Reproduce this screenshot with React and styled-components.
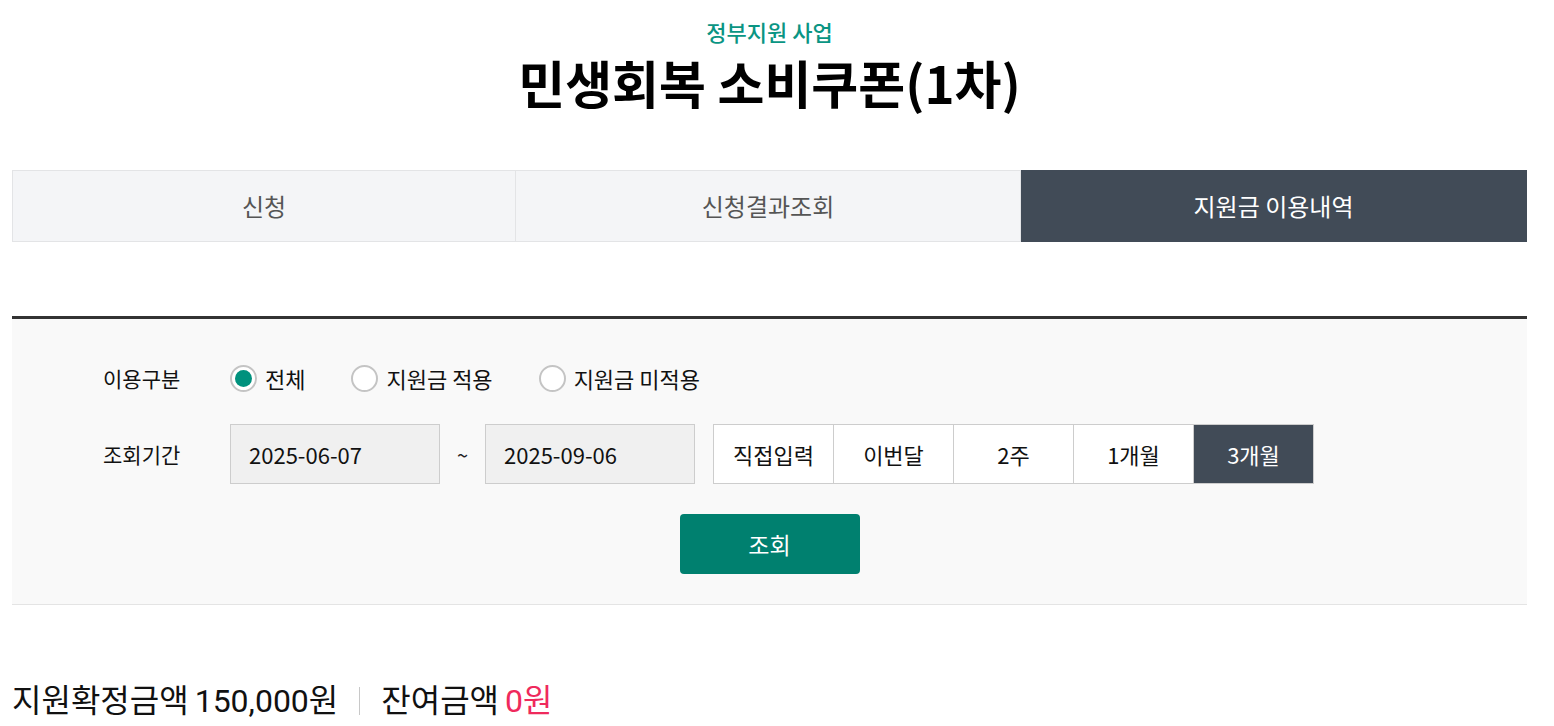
import React, { useState } from "react";
import styled, { createGlobalStyle } from "styled-components";

const GlobalStyle = createGlobalStyle`
  html, body { margin: 0; padding: 0; background: #fff; }
  body { font-family: "Noto Sans CJK KR", "Noto Sans", sans-serif; color: #111; }
  * { box-sizing: border-box; }
`;

const Page = styled.div`
  width: 1515px;
  margin-left: 12px;
  padding-top: 13px;
  padding-bottom: 40px;
`;

const Header = styled.header`
  display: flex;
  flex-direction: column;
  align-items: center;
`;

const Eyebrow = styled.p`
  margin: 0;
  font-size: 22px;
  line-height: 36px;
  font-weight: 500;
  color: #0a9583;
`;

const Title = styled.h1`
  margin: 2px 0 0;
  font-size: 51px;
  line-height: 62px;
  font-weight: 700;
  color: #000;
  letter-spacing: 0;
`;

const Tabs = styled.nav`
  display: grid;
  grid-template-columns: 504px 505px 506px;
  margin-top: 57px;
`;

const Tab = styled.button`
  height: 72px;
  border: 1px solid #e3e4e6;
  border-left-width: ${(p) => (p.$first ? "1px" : "0")};
  background: ${(p) => (p.$active ? "#414b57" : "#f4f5f7")};
  border-color: ${(p) => (p.$active ? "#414b57" : "#e3e4e6")};
  color: ${(p) => (p.$active ? "#fff" : "#555")};
  font-family: inherit;
  font-size: 24px;
  font-weight: 400;
  line-height: 32px;
  cursor: pointer;
  padding: 0;
`;

const SearchPanel = styled.section`
  margin-top: 74px;
  border-top: 3px solid #333;
  border-bottom: 1px solid #e4e4e4;
  background: #f9f9f9;
  padding: 39px 0 30px 91px;
  display: flex;
  flex-direction: column;
`;

const Row = styled.div`
  display: flex;
  align-items: center;
  min-height: ${(p) => p.$h}px;
  margin-top: ${(p) => p.$mt || 0}px;
`;

const Label = styled.span`
  width: 127px;
  flex: none;
  font-size: 21px;
  line-height: 28px;
  color: #111;
`;

const RadioItem = styled.label`
  display: flex;
  align-items: center;
  margin-right: 46px;
  font-size: 22px;
  line-height: 28px;
  color: #111;
  cursor: pointer;
`;

const RadioCircle = styled.span`
  width: 27px;
  height: 27px;
  border-radius: 50%;
  border: 2px solid #c4c4c4;
  background: #fff;
  display: flex;
  align-items: center;
  justify-content: center;
  margin-right: 8px;
  &::after {
    content: "";
    width: 17px;
    height: 17px;
    border-radius: 50%;
    background: ${(p) => (p.$checked ? "#00917d" : "transparent")};
  }
`;

const DateBox = styled.div`
  width: 210px;
  height: 60px;
  border: 1px solid #cdcdcd;
  background: #f0f0f0;
  display: flex;
  align-items: center;
  padding-left: 18px;
  font-size: 22px;
  color: #111;
`;

const Tilde = styled.span`
  width: 45px;
  text-align: center;
  font-size: 20px;
  color: #222;
`;

const PeriodGroup = styled.div`
  display: flex;
  margin-left: 18px;
  border: 1px solid #cdcdcd;
`;

const PeriodBtn = styled.button`
  width: ${(p) => (p.$first ? 119 : 120)}px;
  height: 58px;
  border: 0;
  border-left: ${(p) => (p.$first ? "0" : "1px solid #cdcdcd")};
  background: ${(p) => (p.$active ? "#414b57" : "#fff")};
  color: ${(p) => (p.$active ? "#fff" : "#111")};
  font-family: inherit;
  font-size: 22px;
  padding: 0;
  cursor: pointer;
`;

const ButtonRow = styled.div`
  display: flex;
  justify-content: center;
  margin-top: 30px;
  margin-left: -91px;
`;

const SearchButton = styled.button`
  width: 180px;
  height: 60px;
  border: 0;
  border-radius: 4px;
  background: #00806f;
  color: #fff;
  font-family: inherit;
  font-size: 23px;
  font-weight: 400;
  cursor: pointer;
`;

const Summary = styled.div`
  display: flex;
  align-items: center;
  margin-top: 75px;
  font-family: Roboto, "Noto Sans CJK KR", sans-serif;
  font-size: 32px;
  line-height: 42px;
  color: #111;
`;

const Divider = styled.span`
  width: 1px;
  height: 28px;
  background: #c8c8c8;
  margin: 0 21px 0 21px;
`;

const Amount = styled.span`
  color: ${(p) => (p.$accent ? "#ef2a5c" : "inherit")};
  margin-left: 6px;
`;

const TABS = ["신청", "신청결과조회", "지원금 이용내역"];
const KINDS = ["전체", "지원금 적용", "지원금 미적용"];
const PERIODS = ["직접입력", "이번달", "2주", "1개월", "3개월"];

export default function App() {
  const [kind, setKind] = useState(0);
  const [period, setPeriod] = useState(4);
  return (
    <>
      <GlobalStyle />
      <Page>
        <Header>
          <Eyebrow>정부지원 사업</Eyebrow>
          <Title>민생회복 소비쿠폰(1차)</Title>
        </Header>
        <Tabs>
          {TABS.map((t, i) => (
            <Tab key={t} $first={i === 0} $active={i === 2}>
              {t}
            </Tab>
          ))}
        </Tabs>
        <SearchPanel>
          <Row $h={40}>
            <Label>이용구분</Label>
            {KINDS.map((k, i) => (
              <RadioItem key={k} onClick={() => setKind(i)}>
                <RadioCircle $checked={kind === i} />
                {k}
              </RadioItem>
            ))}
          </Row>
          <Row $h={60} $mt={26}>
            <Label>조회기간</Label>
            <DateBox>2025-06-07</DateBox>
            <Tilde>~</Tilde>
            <DateBox>2025-09-06</DateBox>
            <PeriodGroup>
              {PERIODS.map((p, i) => (
                <PeriodBtn
                  key={p}
                  $first={i === 0}
                  $active={period === i}
                  onClick={() => setPeriod(i)}
                >
                  {p}
                </PeriodBtn>
              ))}
            </PeriodGroup>
          </Row>
          <ButtonRow>
            <SearchButton>조회</SearchButton>
          </ButtonRow>
        </SearchPanel>
        <Summary>
          지원확정금액<Amount>150,000원</Amount>
          <Divider />
          잔여금액<Amount $accent>0원</Amount>
        </Summary>
      </Page>
    </>
  );
}
